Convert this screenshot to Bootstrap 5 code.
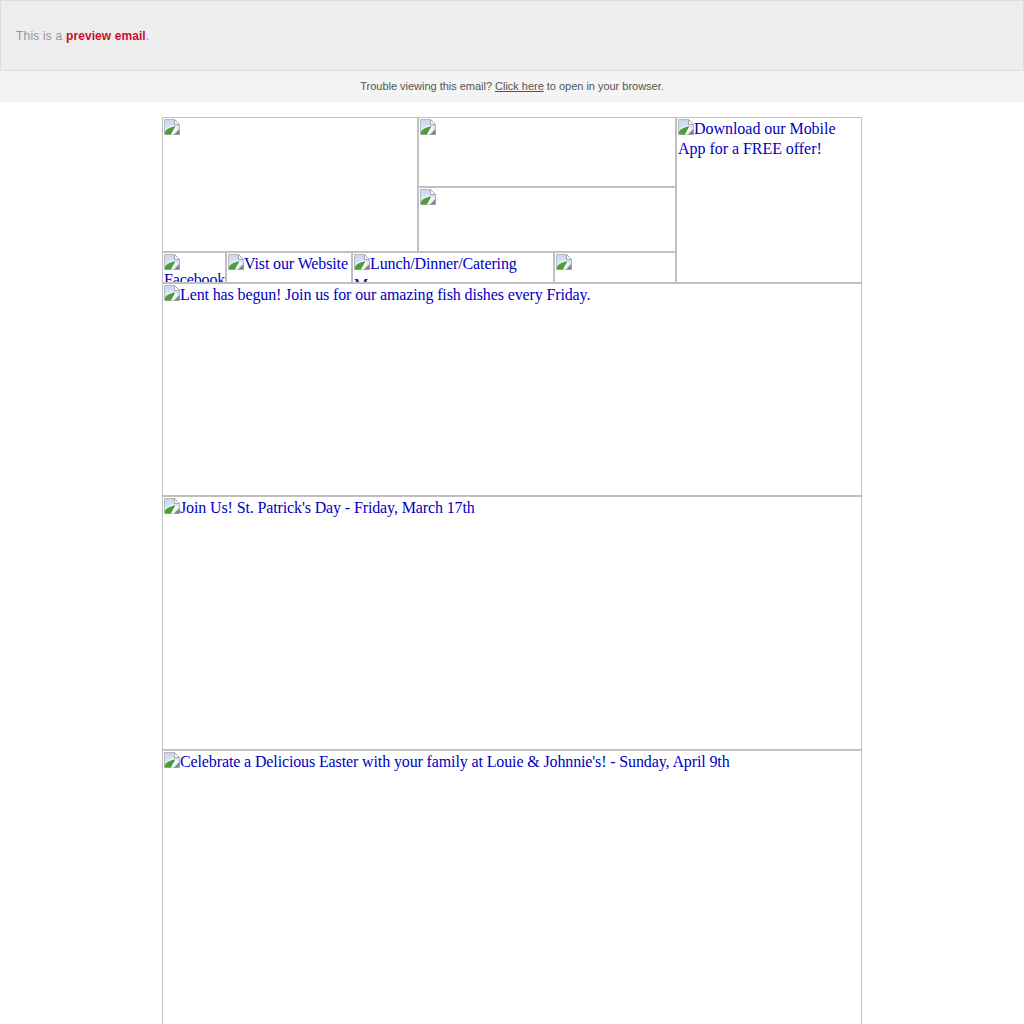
<!DOCTYPE html>
<html lang="en">
<head>
<meta charset="utf-8">
<title>Preview email</title>
<link href="https://cdn.jsdelivr.net/npm/bootstrap@5.3.0/dist/css/bootstrap.min.css" rel="stylesheet">
<style>
html,body{background:#fff}
.page-clip{height:1024px}
.preview-bar{height:71px;background:#ededed;border:1px solid #dcdcdc;padding-left:15px;font:12px/1 "Liberation Sans",Arial,sans-serif;letter-spacing:.2px;color:#929292}
.preview-bar strong{color:#c8102e;font-weight:700;letter-spacing:.08px}
.trouble-bar{height:31px;background:#f4f4f4;border-bottom:1px solid #f0f0f0;font:11px/1 "Liberation Sans",Arial,sans-serif;letter-spacing:-.02px;color:#555}
.trouble-bar a{color:#555}
.mail-sheet{width:700px;margin:15px auto 0;font:16px/20px "Liberation Serif","Times New Roman",serif}
.head-grid{display:grid;grid-template-columns:64px 126px 66px 136px 122px 186px;grid-template-rows:70px 65px 31px}
.slot{border:1px solid #c0c0c0;padding:1px;overflow:hidden;display:block;color:#0000c0;text-decoration:none;letter-spacing:-.125px}
.slot:hover{color:#0000c0}
.slot svg{width:16px;height:16px;vertical-align:-1px}
.s-logo{grid-column:1/4;grid-row:1/3}
.s-top{grid-column:4/6;grid-row:1}
.s-mid{grid-column:4/6;grid-row:2}
.s-app{grid-column:6;grid-row:1/4;letter-spacing:-.04px}
.s-lunch{grid-column:3/5}
.word-low{display:inline-block;padding-top:1px}
.s-fb svg{display:block}
.b1{height:213px}
.b2{height:254px}
.b3{height:400px}
</style>
</head>
<body>
<svg width="0" height="0" class="position-absolute">
<defs>
<linearGradient id="sky" x1="0" y1="0" x2="0" y2="1"><stop offset="0" stop-color="#c6d6f0"/><stop offset="1" stop-color="#eaf0fb"/></linearGradient>
<symbol id="broken" viewBox="0 0 16 16">
<path d="M.5.5H10.500L15.500 5.500V15.500H.5Z" fill="url(#sky)" stroke="#b4b8bf"/>
<path d="M10.500.5V5.500H15.500Z" fill="#fff" stroke="#a3a8b0"/>
<path d="M1 12C3 8.500 6.500 6.500 9.500 6.500L6 10Z" fill="#f4f7fd"/>
<path d="M1 15.500V12.500C3 9.500 7 8 11.500 7.500L7 15.500Z" fill="#4a9f35"/>
<path d="M7 15.500L11.500 7.500L13.500 9L9 15.500Z" fill="#fff"/>
<path d="M10 15.500L15.500 10V15.500Z" fill="#7f858d"/>
</symbol>
</defs>
</svg>
<div class="page-clip overflow-hidden">
  <div class="preview-bar d-flex align-items-center"><span>This is a <strong>preview email</strong>.</span></div>
  <div class="trouble-bar d-flex align-items-center justify-content-center"><span>Trouble viewing this email? <a href="#">Click here</a> to open in your browser.</span></div>
  <div class="mail-sheet">
    <div class="head-grid">
      <a class="slot s-logo" href="#"><svg><use href="#broken"/></svg></a>
      <a class="slot s-top" href="#"><svg><use href="#broken"/></svg></a>
      <a class="slot s-mid" href="#"><svg><use href="#broken"/></svg></a>
      <a class="slot s-app" href="#"><svg><use href="#broken"/></svg>Download our Mobile App for a FREE offer!</a>
      <a class="slot s-fb" href="#"><svg><use href="#broken"/></svg>Facebook</a>
      <a class="slot" href="#"><svg><use href="#broken"/></svg>Vist our Website</a>
      <a class="slot s-lunch" href="#"><svg><use href="#broken"/></svg>Lunch/Dinner/Catering <span class="word-low">Menus</span></a>
      <a class="slot" href="#"><svg><use href="#broken"/></svg></a>
    </div>
    <a class="slot b1" href="#"><svg><use href="#broken"/></svg>Lent has begun! Join us for our amazing fish dishes every Friday.</a>
    <a class="slot b2" href="#"><svg><use href="#broken"/></svg>Join Us! St. Patrick's Day - Friday, March 17th</a>
    <a class="slot b3" href="#"><svg><use href="#broken"/></svg>Celebrate a Delicious Easter with your family at Louie &amp; Johnnie's! - Sunday, April 9th</a>
  </div>
</div>
<script src="https://cdn.jsdelivr.net/npm/bootstrap@5.3.0/dist/js/bootstrap.bundle.min.js"></script>
</body>
</html>
